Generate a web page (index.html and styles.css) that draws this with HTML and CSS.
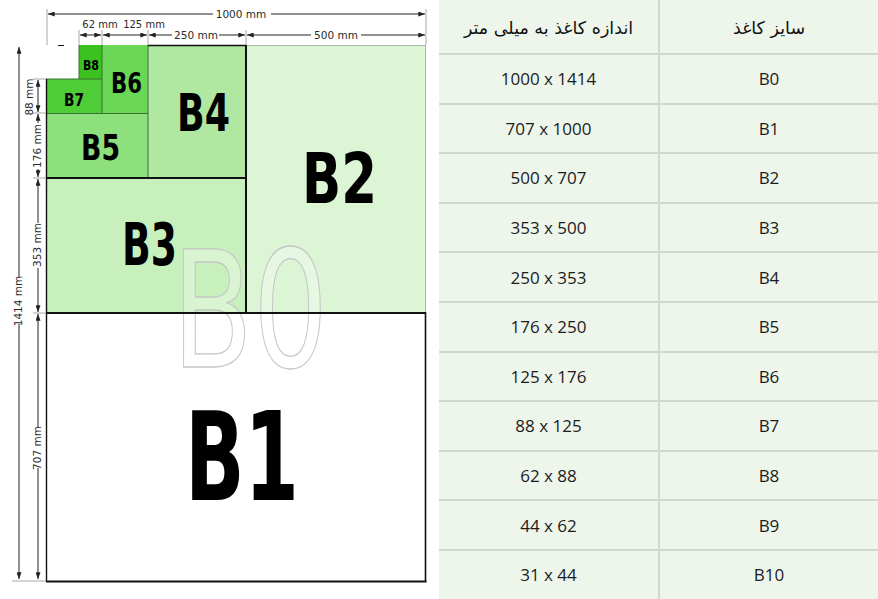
FILE: index.html
```html
<!DOCTYPE html>
<html lang="fa">
<head>
<meta charset="utf-8">
<title>B paper sizes</title>
<link rel="stylesheet" href="styles.css">
</head>
<body>
<div class="page">
  <div class="diagram">
    <svg class="sketch" width="439" height="599" viewBox="0 0 439 599" xmlns="http://www.w3.org/2000/svg">
      <defs>
        <marker id="ar" viewBox="0 0 8 6" refX="8" refY="3" markerWidth="7" markerHeight="5" markerUnits="userSpaceOnUse" orient="auto-start-reverse">
          <path d="M0 0 L8 3 L0 6 Z" fill="#222"/>
        </marker>
      </defs>

      <!-- sheets -->
      <rect x="46" y="313" width="380" height="269" fill="#ffffff"/>
      <rect x="246" y="45" width="180" height="268" fill="#dcf5d5"/>
      <rect x="46" y="178" width="200" height="135" fill="#c8f0bd"/>
      <rect x="148" y="45" width="98" height="133" fill="#b0e8a2"/>
      <rect x="46" y="113" width="102" height="65" fill="#8de07c"/>
      <rect x="102" y="45" width="46" height="68" fill="#6ad856"/>
      <rect x="46" y="79" width="56" height="34" fill="#4fcd36"/>
      <rect x="79" y="45" width="23" height="34" fill="#3bc21f"/>
      <rect x="46" y="45" width="33" height="34" fill="#ffffff"/>

      <!-- ghost B0 -->
      <text class="ghost" x="172" y="367" font-size="162" textLength="156" lengthAdjust="spacingAndGlyphs">B0</text>

      <!-- thin separators -->
      <g stroke="#3d6e35" stroke-width="1" fill="none">
        <line x1="79" y1="45" x2="79" y2="79"/>
        <line x1="46" y1="79" x2="102" y2="79"/>
        <line x1="102" y1="45" x2="102" y2="113"/>
        <line x1="46" y1="113.5" x2="148" y2="113.5"/>
        <line x1="148" y1="45" x2="148" y2="178"/>
      </g>
      <g stroke="#a9b9a6" stroke-width="1" fill="none">
        <line x1="246" y1="45.5" x2="426" y2="45.5"/>
        <line x1="425.5" y1="45" x2="425.5" y2="313"/>
      </g>
      <!-- heavy lines -->
      <g stroke="#111" fill="none">
        <line x1="148" y1="45.5" x2="247" y2="45.5" stroke-width="1.5"/>
        <line x1="246" y1="45" x2="246" y2="314" stroke-width="2"/>
        <line x1="46" y1="178" x2="246" y2="178" stroke-width="2"/>
        <line x1="46" y1="313" x2="426" y2="313" stroke-width="2.2"/>
        <line x1="46.5" y1="79" x2="46.5" y2="582" stroke-width="1.4"/>
        <line x1="425.5" y1="312" x2="425.5" y2="582" stroke-width="1.6"/>
        <line x1="46" y1="581.5" x2="426.5" y2="581.5" stroke-width="1.8"/>
        <line x1="58" y1="45.5" x2="64" y2="45.5" stroke-width="1"/>
      </g>

      <!-- size labels -->
      <g class="lbl">
        <text x="83" y="70" font-size="14" textLength="16" lengthAdjust="spacingAndGlyphs">B8</text>
        <text x="64" y="106" font-size="17" textLength="20" lengthAdjust="spacingAndGlyphs">B7</text>
        <text x="111" y="93" font-size="29" textLength="31" lengthAdjust="spacingAndGlyphs">B6</text>
        <text x="81" y="160" font-size="36" textLength="39" lengthAdjust="spacingAndGlyphs">B5</text>
        <text x="177" y="131" font-size="52" textLength="53" lengthAdjust="spacingAndGlyphs">B4</text>
        <text x="122" y="265" font-size="58" textLength="55" lengthAdjust="spacingAndGlyphs">B3</text>
        <text x="302" y="203" font-size="70" textLength="75" lengthAdjust="spacingAndGlyphs">B2</text>
        <text x="185" y="500" font-size="123" textLength="114" lengthAdjust="spacingAndGlyphs">B1</text>
      </g>

      <!-- extension lines -->
      <g stroke="#a8a8a8" stroke-width="1" fill="none">
        <line x1="47" y1="9" x2="47" y2="45"/>
        <line x1="426" y1="9" x2="426" y2="45"/>
        <line x1="79" y1="30" x2="79" y2="45"/>
        <line x1="102" y1="30" x2="102" y2="45"/>
        <line x1="148" y1="30" x2="148" y2="45"/>
        <line x1="246" y1="30" x2="246" y2="45"/>
        <line x1="33" y1="79" x2="46" y2="79"/>
        <line x1="33" y1="113" x2="46" y2="113"/>
        <line x1="33" y1="178" x2="46" y2="178"/>
        <line x1="33" y1="313" x2="46" y2="313"/>
        <line x1="12" y1="581" x2="46" y2="581"/>
      </g>

      <!-- dimension lines -->
      <g stroke="#222" stroke-width="1" fill="none">
        <line x1="48" y1="14" x2="213" y2="14" marker-start="url(#ar)"/>
        <line x1="271" y1="14" x2="425" y2="14" marker-end="url(#ar)"/>
        <line x1="80" y1="35" x2="101" y2="35" marker-start="url(#ar)" marker-end="url(#ar)"/>
        <line x1="103" y1="35" x2="147" y2="35" marker-start="url(#ar)" marker-end="url(#ar)"/>
        <line x1="149" y1="35" x2="172" y2="35" marker-start="url(#ar)"/>
        <line x1="219" y1="35" x2="245" y2="35" marker-end="url(#ar)"/>
        <line x1="247" y1="35" x2="311" y2="35" marker-start="url(#ar)"/>
        <line x1="361" y1="35" x2="425" y2="35" marker-end="url(#ar)"/>

        <line x1="19" y1="47" x2="19" y2="278" marker-start="url(#ar)"/>
        <line x1="19" y1="324" x2="19" y2="579" marker-end="url(#ar)"/>
        <line x1="38" y1="80" x2="38" y2="112" marker-start="url(#ar)" marker-end="url(#ar)"/>
        <line x1="38" y1="114" x2="38" y2="123" marker-start="url(#ar)"/>
        <line x1="38" y1="169" x2="38" y2="177" marker-end="url(#ar)"/>
        <line x1="38" y1="179" x2="38" y2="223" marker-start="url(#ar)"/>
        <line x1="38" y1="268" x2="38" y2="312" marker-end="url(#ar)"/>
        <line x1="38" y1="314" x2="38" y2="428" marker-start="url(#ar)"/>
        <line x1="38" y1="468" x2="38" y2="579" marker-end="url(#ar)"/>
      </g>

      <g class="dim">
        <text x="241" y="18">1000 mm</text>
        <text class="small" x="100" y="28">62 mm</text>
        <text class="small" x="144" y="28">125 mm</text>
        <text x="196" y="39">250 mm</text>
        <text x="336" y="39">500 mm</text>
        <text x="22" y="301" transform="rotate(-90 22 301)">1414 mm</text>
        <text x="33" y="97" transform="rotate(-90 33 97)">88 mm</text>
        <text x="41" y="146" transform="rotate(-90 41 146)">176 mm</text>
        <text x="41" y="245" transform="rotate(-90 41 245)">353 mm</text>
        <text x="41" y="448" transform="rotate(-90 41 448)">707 mm</text>
      </g>
    </svg>
  </div>

  <div class="table">
    <div class="row head">
      <div class="cell mm fa">اندازه کاغذ به میلی متر</div>
      <div class="cell name fa">سایز کاغذ</div>
    </div>
    <div class="row"><div class="cell mm">1000 x 1414</div><div class="cell name">B0</div></div>
    <div class="row"><div class="cell mm">707 x 1000</div><div class="cell name">B1</div></div>
    <div class="row"><div class="cell mm">500 x 707</div><div class="cell name">B2</div></div>
    <div class="row"><div class="cell mm">353 x 500</div><div class="cell name">B3</div></div>
    <div class="row"><div class="cell mm">250 x 353</div><div class="cell name">B4</div></div>
    <div class="row"><div class="cell mm">176 x 250</div><div class="cell name">B5</div></div>
    <div class="row"><div class="cell mm">125 x 176</div><div class="cell name">B6</div></div>
    <div class="row"><div class="cell mm">88 x 125</div><div class="cell name">B7</div></div>
    <div class="row"><div class="cell mm">62 x 88</div><div class="cell name">B8</div></div>
    <div class="row"><div class="cell mm">44 x 62</div><div class="cell name">B9</div></div>
    <div class="row"><div class="cell mm">31 x 44</div><div class="cell name">B10</div></div>
  </div>
</div>
</body>
</html>
```

FILE: styles.css
```css
html, body {
  margin: 0;
  padding: 0;
  background: #ffffff;
}

.page {
  display: flex;
  width: 878px;
  height: 599px;
  overflow: hidden;
}

.diagram {
  width: 439px;
  height: 599px;
  flex: none;
}

.sketch {
  display: block;
}

.ghost {
  font-family: "DejaVu Sans", sans-serif;
  fill: rgba(255, 255, 255, 0.3);
  stroke: #c6c6c6;
  stroke-width: 1.3;
}

.lbl text {
  font-family: "DejaVu Sans", sans-serif;
  font-weight: bold;
  fill: #000000;
}

.dim text {
  font-family: "DejaVu Sans", sans-serif;
  font-size: 10.5px;
  fill: #2a2a2a;
  text-anchor: middle;
}

.dim text.small {
  font-size: 10px;
}

.table {
  width: 439px;
  height: 599px;
  flex: none;
  display: flex;
  flex-direction: column;
  background: #eef6ec;
}

.row {
  display: flex;
  height: 49.6px;
  box-sizing: border-box;
  border-top: 2px solid #cfd9ce;
  flex: none;
}

.row.head {
  height: 53px;
  border-top: none;
}

.cell {
  display: flex;
  align-items: center;
  justify-content: center;
  font-family: "Open Sans", sans-serif;
  font-size: 17px;
  color: #1c1c1c;
}

.cell.mm {
  width: 221px;
  box-sizing: border-box;
  border-right: 2px solid #cfd9ce;
}

.cell.name {
  flex: 1;
}

.cell.fa {
  font-family: "DejaVu Sans", sans-serif;
  font-size: 17.5px;
  direction: rtl;
  color: #111111;
  padding-top: 2px;
}
```
